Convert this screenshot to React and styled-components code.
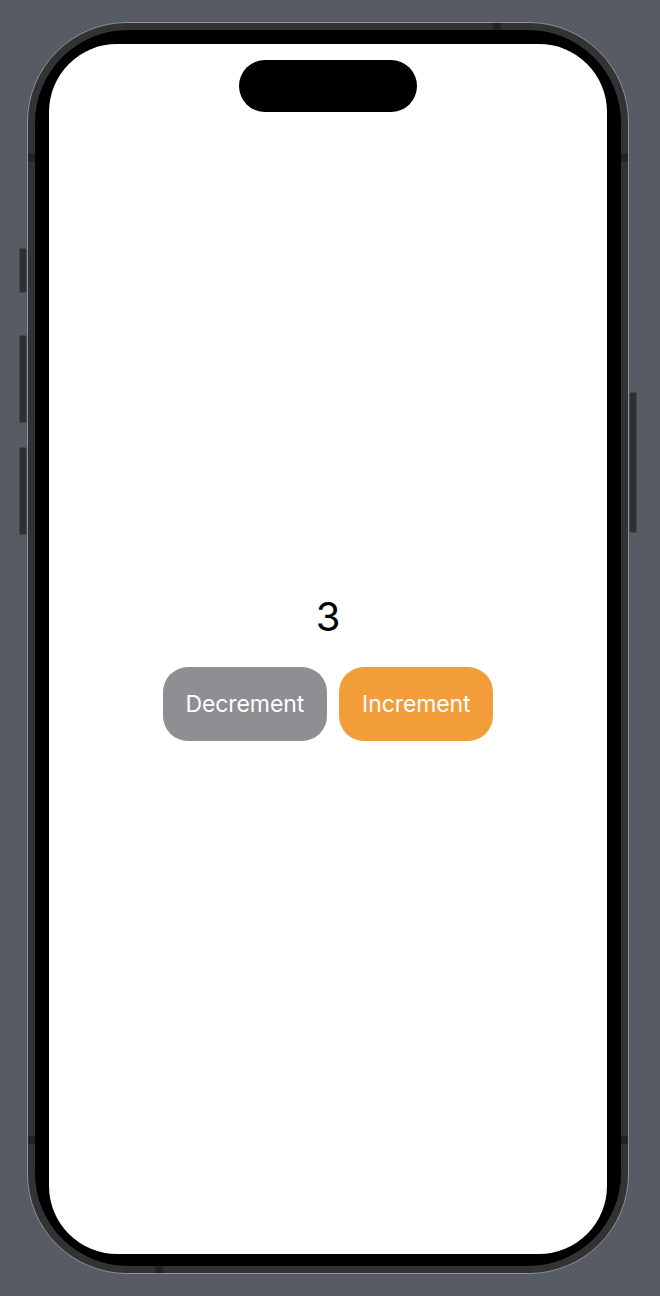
import React, { useState } from 'react';
import styled, { createGlobalStyle } from 'styled-components';

const Global = createGlobalStyle`
    html, body {
        margin: 0;
        padding: 0;
        background: #575c64;
    }
    #root {
        width: 660px;
        height: 1296px;
        padding: 22px 0 0 27px;
        box-sizing: border-box;
    }
`

const Phone = styled.div`
    position: relative;
    width: 602px;
    height: 1252px;
    box-sizing: border-box;
    border: 1px solid #8d9096;
    border-radius: 100px;
    background: #333335;
    padding: 7px;
`

const Bezel = styled.div`
    height: 100%;
    box-sizing: border-box;
    border-radius: 93px;
    background: #000;
    padding: 14px 14px 12px 14px;
`

const Screen = styled.div`
    position: relative;
    height: 100%;
    border-radius: 68px;
    background: #fff;
    display: flex;
    flex-direction: column;
    align-items: center;
    justify-content: center;
    padding-top: 36px;
    box-sizing: border-box;
    overflow: hidden;
`

const Island = styled.div`
    position: absolute;
    top: 16px;
    left: 50%;
    transform: translateX(-50%);
    width: 178px;
    height: 52px;
    border-radius: 26px;
    background: #000;
`

const SideButton = styled.div`
    position: absolute;
    width: 8px;
    background: #2f3033;
    border: 1px solid #45484d;
    box-sizing: border-box;
    border-radius: 2px;
    ${({ $side }) => $side === 'left' ? 'left: -9px;' : 'right: -9px;'}
    top: ${({ $top }) => $top}px;
    height: ${({ $h }) => $h}px;
`

const Band = styled.div`
    position: absolute;
    background: #222224;
    width: ${({ $w }) => $w}px;
    height: ${({ $h }) => $h}px;
    ${({ $pos }) => $pos}
`

const Count = styled.div`
    font-family: Inter, "Liberation Sans", sans-serif;
    font-size: 40px;
    line-height: 48px;
    color: #000;
`

const Row = styled.div`
    display: flex;
    gap: 12px;
    margin-top: 26px;
`

const Button = styled.button`
    height: 74px;
    padding: 0 23px;
    border: none;
    border-radius: 25px;
    background: ${({ $tone }) => $tone === 'orange' ? '#f29c3a' : '#8f8e93'};
    color: #fff;
    font-family: Inter, "Liberation Sans", sans-serif;
    font-size: 23px;
    letter-spacing: -0.1px;
    cursor: pointer;
`

export default function App() {
    const [count, setCount] = useState(3)

    return (
        <>
            <Global />
            <Phone>
                <SideButton $side="left" $top={225} $h={45} />
                <SideButton $side="left" $top={312} $h={88} />
                <SideButton $side="left" $top={424} $h={88} />
                <SideButton $side="right" $top={369} $h={141} />
                <Band $w={7} $h={8} $pos="left: 0; top: 131px;" />
                <Band $w={7} $h={8} $pos="right: 0; top: 131px;" />
                <Band $w={7} $h={8} $pos="left: 0; bottom: 129px;" />
                <Band $w={7} $h={8} $pos="right: 0; bottom: 129px;" />
                <Band $w={8} $h={7} $pos="left: 127px; bottom: 0;" />
                <Band $w={8} $h={7} $pos="right: 127px; top: 0;" />
                <Bezel>
                    <Screen>
                        <Island />
                        <Count>{count}</Count>
                        <Row>
                            <Button onClick={() => setCount(count - 1)}>Decrement</Button>
                            <Button $tone="orange" onClick={() => setCount(count + 1)}>Increment</Button>
                        </Row>
                    </Screen>
                </Bezel>
            </Phone>
        </>
    )
}
